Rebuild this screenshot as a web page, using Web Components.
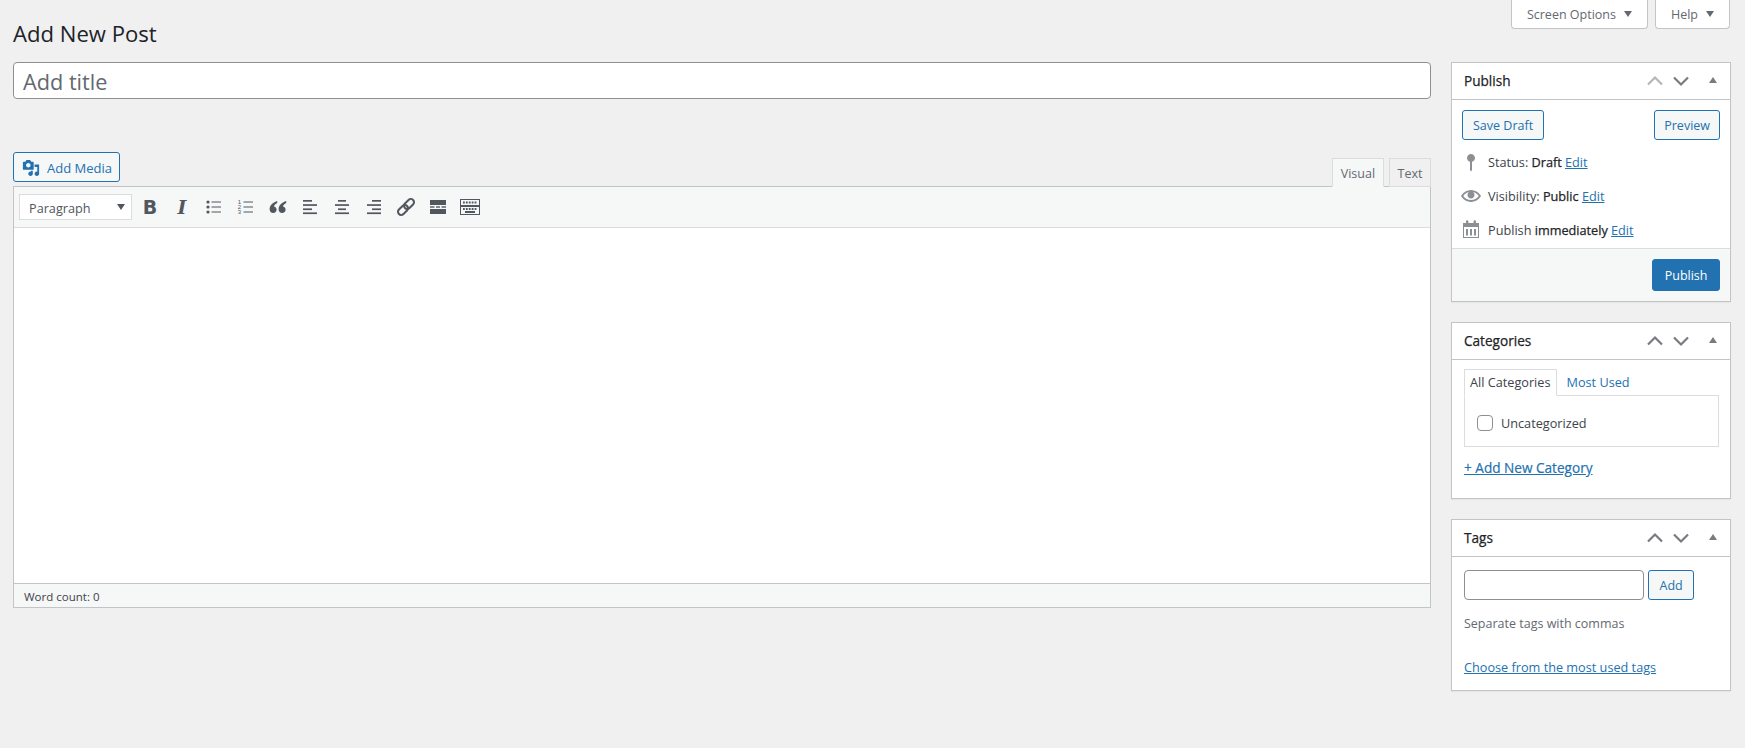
<!DOCTYPE html>
<html lang="en">
<head>
<meta charset="utf-8">
<title>Add New Post</title>
<style>
  html, body { margin: 0; height: 100%; background: #f0f0f1; }
  body { font: 12.7px/1.4 "Open Sans", "Noto Sans", sans-serif; color: #3c434a; overflow: hidden; }
</style>
</head>
<body>
<script>
const FONT = '"Open Sans", "Noto Sans", sans-serif';

function define(name, css, html) {
  customElements.define(name, class extends HTMLElement {
    constructor() {
      super();
      this.attachShadow({ mode: 'open' });
      this.shadowRoot.innerHTML = `<style>${css}</style>${typeof html === 'function' ? html(this) : html}`;
    }
  });
}

const ICONS = {
  media: '<path d="M13 11V4c0-.55-.45-1-1-1h-1.67L9 1H5L3.67 3H2c-.55 0-1 .45-1 1v7c0 .55.45 1 1 1h10c.55 0 1-.45 1-1zM7 4.5c1.38 0 2.5 1.12 2.5 2.5S8.38 9.5 7 9.5 4.5 8.38 4.5 7 5.62 4.5 7 4.5zM14 6h5v10.5c0 1.38-1.12 2.5-2.5 2.5S14 17.88 14 16.5s1.12-2.5 2.5-2.5c.17 0 .34.02.5.05V9h-3V6zm-4 8.05V13h2v3.5c0 1.38-1.12 2.5-2.5 2.5S7 17.88 7 16.5 8.12 14 9.5 14c.17 0 .34.02.5.05z"/>',
  pin: '<path d="M14 6c0-2.21-1.79-4-4-4S6 3.79 6 6c0 1.86 1.28 3.41 3 3.86V18l1 1.5 1-1.5V9.86c1.72-.45 3-2 3-3.86z"/>',
  eye: '<path d="M19.7 9.4C17.7 6 14 3.9 10 3.9S2.3 6 .3 9.4L0 10l.3.6c2 3.4 5.7 5.5 9.7 5.5s7.7-2.1 9.7-5.5l.3-.6-.3-.6zM10 14.1c-3.1 0-6-1.6-7.7-4.1C3.6 8 5.7 6.6 8 6.1c-.9.6-1.5 1.7-1.5 2.9 0 1.9 1.6 3.5 3.5 3.5s3.5-1.6 3.5-3.5c0-1.2-.6-2.2-1.5-2.9 2.3.5 4.4 1.9 5.7 3.9-1.7 2.5-4.6 4.1-7.7 4.1z"/>',
  calendar: '<path fill-rule="evenodd" d="M2 4h3V2.5a1.2 1.2 0 0 1 2.4 0V4h5.2V2.5a1.2 1.2 0 0 1 2.4 0V4h3v15H2zM3 8v10h14V8zM5 10h2v6.5H5zM9 10h2v6.5H9zM13 10h2v6.5h-2z"/>',
  ul: '<circle cx="4" cy="5" r="1.6"/><circle cx="4" cy="10" r="1.6"/><circle cx="4" cy="15" r="1.6"/><rect x="7.5" y="4.5" width="9.5" height="1"/><rect x="7.5" y="9.5" width="9.5" height="1"/><rect x="7.5" y="14.5" width="9.5" height="1"/>',
  ol: '<text x="1.8" y="7" font-size="6" font-family="Liberation Sans">1</text><text x="1.8" y="12.2" font-size="6" font-family="Liberation Sans">2</text><text x="1.8" y="17.4" font-size="6" font-family="Liberation Sans">3</text><rect x="7.5" y="4.5" width="9.5" height="1"/><rect x="7.5" y="9.5" width="9.5" height="1"/><rect x="7.5" y="14.5" width="9.5" height="1"/>',
  quote: '<path d="M9.2 4C5.5 5.2 1.6 8 1.6 12.3 1.6 14.7 3.1 16 5.1 16c2 0 3.5-1.4 3.5-3.3S7.3 9.6 5.9 9.4c.3-1.2 1.7-2.6 3.3-3.3zM18.2 4c-3.7 1.2-7.6 4-7.6 8.3 0 2.4 1.5 3.7 3.5 3.7 2 0 3.5-1.4 3.5-3.3s-1.3-3.1-2.7-3.3c.3-1.2 1.7-2.6 3.3-3.3z"/>',
  left: '<rect x="3" y="3" width="9" height="1.7"/><rect x="3" y="7.2" width="14" height="1.7"/><rect x="3" y="11.4" width="9" height="1.7"/><rect x="3" y="15.4" width="14" height="1.7"/>',
  center: '<rect x="6" y="3" width="8" height="1.7"/><rect x="3" y="7.2" width="14" height="1.7"/><rect x="6" y="11.4" width="8" height="1.7"/><rect x="3" y="15.4" width="14" height="1.7"/>',
  right: '<rect x="8" y="3" width="9" height="1.7"/><rect x="3" y="7.2" width="14" height="1.7"/><rect x="8" y="11.4" width="9" height="1.7"/><rect x="3" y="15.4" width="14" height="1.7"/>',
  link: '<g fill="none" stroke="currentColor" stroke-width="2" transform="rotate(-45 10 10)"><rect x="0" y="6.8" width="11.5" height="6.4" rx="3.2"/><rect x="8.5" y="6.8" width="11.5" height="6.4" rx="3.2"/></g>',
  more: '<rect x="2" y="3" width="16" height="5"/><rect x="2" y="9.3" width="4.5" height="1.4"/><rect x="8" y="9.3" width="4" height="1.4"/><rect x="13.5" y="9.3" width="4.5" height="1.4"/><rect x="2" y="12" width="16" height="5"/>',
  keyboard: '<g fill="none" stroke="currentColor"><rect x=".5" y="2.5" width="19" height="6"/><rect x=".5" y="9.5" width="19" height="8"/></g><path stroke="currentColor" stroke-width="2" stroke-dasharray="1.8 1.1" d="M3 5.5h14M3 12h14"/><path stroke="currentColor" stroke-width="2" d="M5 15h10"/>'
};

const svg = (name, size = 20) => `<svg width="${size}" height="${size}" viewBox="0 0 20 20" fill="currentColor" aria-hidden="true">${ICONS[name]}</svg>`;

define('wp-button', `
  :host { display: inline-flex; align-items: center; box-sizing: border-box; height: 30px; padding: 2px 10px 0; gap: 5px;
    border: 1px solid #2271b1; border-radius: 3px; background: #f6f7f7; color: #2271b1; font-size: 12.5px; white-space: nowrap; cursor: pointer; }
  :host([primary]) { background: #2271b1; color: #fff; height: 32px; padding: 1px 11.5px 0; }
`, '<slot></slot>');

define('wp-screen-tab', `
  :host { display: inline-flex; align-items: center; gap: 8px; box-sizing: border-box; height: 29px; padding: 2px 15px 0;
    background: #fff; border: 1px solid #c3c4c7; border-top: 0; border-radius: 0 0 4px 4px; color: #646970; font-size: 12.5px; }
  i { width: 0; height: 0; border: 4px solid transparent; border-top: 6px solid #646970; border-bottom: 0; margin-top: -3px; }
`, '<slot></slot><i></i>');

define('wp-screen-meta', `
  :host { display: flex; justify-content: flex-end; gap: 7px; padding-right: 15px; height: 29px; }
`, '<slot></slot>');

define('wp-title-input', `
  :host { display: block; }
  input { display: block; box-sizing: border-box; width: 100%; height: 37px; padding: 4px 9px 2px; margin: 0; border: 1px solid #8c8f94; border-radius: 4px;
    background: #fff; font: 21.7px/1.3 ${FONT}; color: #1d2327; outline: 0; }
  input::placeholder { color: #646970; opacity: 1; }
`, '<input type="text" placeholder="Add title">');

define('wp-editor', `
  :host { display: block; }
  .top { display: flex; justify-content: space-between; align-items: flex-end; height: 34px; }
  .top wp-button { margin-bottom: 4px; gap: 7px; padding: 2px 7px 0 8px; font-size: 13px; }
  .tabs { display: flex; gap: 5px; margin-bottom: -1px; position: relative; font-size: 12.5px; }
  .tab { box-sizing: border-box; height: 29px; padding: 2px 7.5px 0; display: flex; align-items: center; border: 1px solid #dcdcde; background: #f0f0f1; color: #646970; }
  .tab.on { background: #f6f7f7; border-bottom-color: #f6f7f7; padding: 2px 8px 0; }
  .frame { border: 1px solid #c3c4c7; background: #fff; }
  .bar { display: flex; align-items: center; height: 41px; padding-left: 5px; background: #f6f7f7; border-bottom: 1px solid #dcdcde; box-sizing: border-box; }
  .select { box-sizing: border-box; display: flex; align-items: center; justify-content: space-between; width: 113px; height: 26px; margin-right: 2px;
    padding: 0 6px 0 9px; background: #fff; border: 1px solid #dcdcde; color: #50575e; }
  .select span { padding-top: 4px; }
  .select i { width: 0; height: 0; border: 4px solid transparent; border-top: 6px solid #50575e; border-bottom: 0; }
  .btn { flex: none; width: 32px; height: 32px; display: flex; align-items: center; justify-content: center; color: #50575e; }
  .b { font: bold 19px/1 "DejaVu Sans", sans-serif; }
  .i { font: italic bold 19px/1 "DejaVu Serif", serif; }
  .content { height: 355px; background: #fff; }
  .status { box-sizing: border-box; height: 24px; padding: 3px 10px 0; display: flex; align-items: center; font-size: 11.5px; background: #f6f7f7; border-top: 1px solid #c3c4c7; color: #3c434a; }
`, `
  <div class="top">
    <wp-button><span style="display:flex;color:#2271b1;margin-top:-1px">${svg('media', 18)}</span>Add Media</wp-button>
    <div class="tabs"><div class="tab on">Visual</div><div class="tab">Text</div></div>
  </div>
  <div class="frame">
    <div class="bar">
      <div class="select"><span>Paragraph</span><i></i></div>
      <div class="btn b">B</div>
      <div class="btn i">I</div>
      <div class="btn">${svg('ul')}</div>
      <div class="btn">${svg('ol')}</div>
      <div class="btn">${svg('quote')}</div>
      <div class="btn">${svg('left')}</div>
      <div class="btn">${svg('center')}</div>
      <div class="btn">${svg('right')}</div>
      <div class="btn">${svg('link')}</div>
      <div class="btn">${svg('more')}</div>
      <div class="btn">${svg('keyboard')}</div>
    </div>
    <div class="content"></div>
    <div class="status">Word count: 0</div>
  </div>
`);

define('wp-post-box', `
  :host { display: block; background: #fff; border: 1px solid #c3c4c7; box-shadow: 0 1px 1px rgba(0,0,0,.04); margin-bottom: 20px; }
  header { display: flex; align-items: center; height: 36px; padding-left: 12px; border-bottom: 1px solid #c3c4c7; box-sizing: content-box; }
  h2 { flex: 1; margin: 0; font-size: 13.6px; font-weight: 500; color: #1d2327; line-height: 1.4; -webkit-text-stroke: .25px #1d2327; }
  .handle { display: flex; align-items: center; }
  .handle svg { display: block; }
  .tri { width: 0; height: 0; border: 4px solid transparent; border-bottom: 6px solid #787c82; border-top: 0; margin: -2px 13px 0 15px; }
  :host([first-off]) .up { opacity: .55; }
`, (el) => `
  <header>
    <h2>${el.getAttribute('heading')}</h2>
    <div class="handle">
      <svg class="up" width="26" height="20" viewBox="0 0 26 20" fill="none" stroke="#787c82" stroke-width="2.2"><path d="M6 13.5l7-7 7 7"/></svg>
      <svg width="26" height="20" viewBox="0 0 26 20" fill="none" stroke="#787c82" stroke-width="2.2"><path d="M6 6.5l7 7 7-7"/></svg>
      <div class="tri"></div>
    </div>
  </header>
  <slot></slot>
`);

define('wp-publish-body', `
  :host { display: block; }
  .actions { display: flex; justify-content: space-between; padding: 10px 10px 0; }
  .actions wp-button:last-child { padding: 2px 9px 0; }
  .rows { padding: 5px 0 1px; }
  .row { display: flex; align-items: center; height: 34px; padding-left: 9px; color: #3c434a; }
  .row span:last-child { white-space: pre; padding-top: 2px; }
  .row .ico { width: 20px; display: flex; margin-right: 7px; color: #8c8f94; }
  .row svg { display: block; }
  .row:last-child .ico { margin-top: -2px; padding-top: 0; }
  b { font-weight: 500; color: #1d2327; -webkit-text-stroke: .25px #1d2327; }
  a { color: #2271b1; text-decoration: underline; }
  footer { display: flex; justify-content: flex-end; height: 53px; box-sizing: border-box; padding: 10px 10px 0; background: #f6f7f7; border-top: 1px solid #dcdcde; }
`, `
  <div class="actions"><wp-button>Save Draft</wp-button><wp-button>Preview</wp-button></div>
  <div class="rows">
    <div class="row"><span class="ico">${svg('pin')}</span><span>Status: <b>Draft</b> <a href="#">Edit</a></span></div>
    <div class="row"><span class="ico">${svg('eye')}</span><span>Visibility: <b>Public</b> <a href="#">Edit</a></span></div>
    <div class="row"><span class="ico">${svg('calendar')}</span><span>Publish <b>immediately</b> <a href="#">Edit</a></span></div>
  </div>
  <footer><wp-button primary>Publish</wp-button></footer>
`);

define('wp-categories-body', `
  :host { display: block; padding: 9px 12px 22px; }
  .tabs { display: flex; height: 26px; position: relative; z-index: 1; }
  .tab { box-sizing: border-box; height: 27px; padding: 0 5px; display: flex; align-items: center; color: #2271b1; }
  .tab.on { border: 1px solid #dcdcde; border-bottom-color: #fff; color: #3c434a; }
  .tab + .tab { margin-left: 5px; }
  .panel { box-sizing: border-box; height: 52px; margin-right: -1px; padding-left: 12px; display: flex; align-items: center; gap: 8px; border: 1px solid #dcdcde; }
  .panel span { padding-top: 5px; }
  .check { box-sizing: border-box; width: 16px; height: 16px; margin-top: 4px; border: 1px solid #8c8f94; border-radius: 4px; background: #fff; }
  a { display: block; margin-top: 12px; margin-bottom: -1px; line-height: 18px; color: #2271b1; text-decoration: underline; font-weight: 500; font-size: 13.6px; -webkit-text-stroke: .2px #2271b1; }
`, `
  <div class="tabs"><div class="tab on">All Categories</div><div class="tab">Most Used</div></div>
  <div class="panel"><div class="check"></div><span>Uncategorized</span></div>
  <a href="#">+ Add New Category</a>
`);

define('wp-tags-body', `
  :host { display: block; padding: 13px 12px 13px; }
  .add { display: flex; gap: 4px; }
  input { box-sizing: border-box; width: 180px; height: 30px; margin: 0; border: 1px solid #8c8f94; border-radius: 4px; background: #fff; outline: 0; }
  wp-button { padding: 2px 10.5px 0; }
  p { margin: 14px 0 -1px; color: #646970; line-height: 20px; font-size: 12.5px; }
  a { display: block; margin-top: 24px; line-height: 20px; color: #2271b1; text-decoration: underline; }
`, `
  <div class="add"><input type="text" aria-label="Add tag"><wp-button>Add</wp-button></div>
  <p>Separate tags with commas</p>
  <a href="#">Choose from the most used tags</a>
`);

define('wp-admin-page', `
  :host { display: block; }
  h1 { margin: -11px 0 0; padding: 0 0 0 13px; height: 35px; font-size: 22.1px; font-weight: 400; line-height: 30px; color: #1d2327; }
  .cols { display: grid; grid-template-columns: 1fr 280px; gap: 20px; padding: 9px 14px 0 13px; }
  .main { min-width: 0; }
  wp-editor { margin-top: 53px; }
`, `
  <slot name="meta"></slot>
  <h1>Add New Post</h1>
  <div class="cols">
    <div class="main"><wp-title-input></wp-title-input><wp-editor></wp-editor></div>
    <div class="side"><slot></slot></div>
  </div>
`);

document.body.innerHTML = `
  <wp-admin-page>
    <wp-screen-meta slot="meta"><wp-screen-tab>Screen Options</wp-screen-tab><wp-screen-tab>Help</wp-screen-tab></wp-screen-meta>
    <wp-post-box heading="Publish" first-off><wp-publish-body></wp-publish-body></wp-post-box>
    <wp-post-box heading="Categories"><wp-categories-body></wp-categories-body></wp-post-box>
    <wp-post-box heading="Tags"><wp-tags-body></wp-tags-body></wp-post-box>
  </wp-admin-page>
`;
</script>
</body>
</html>
